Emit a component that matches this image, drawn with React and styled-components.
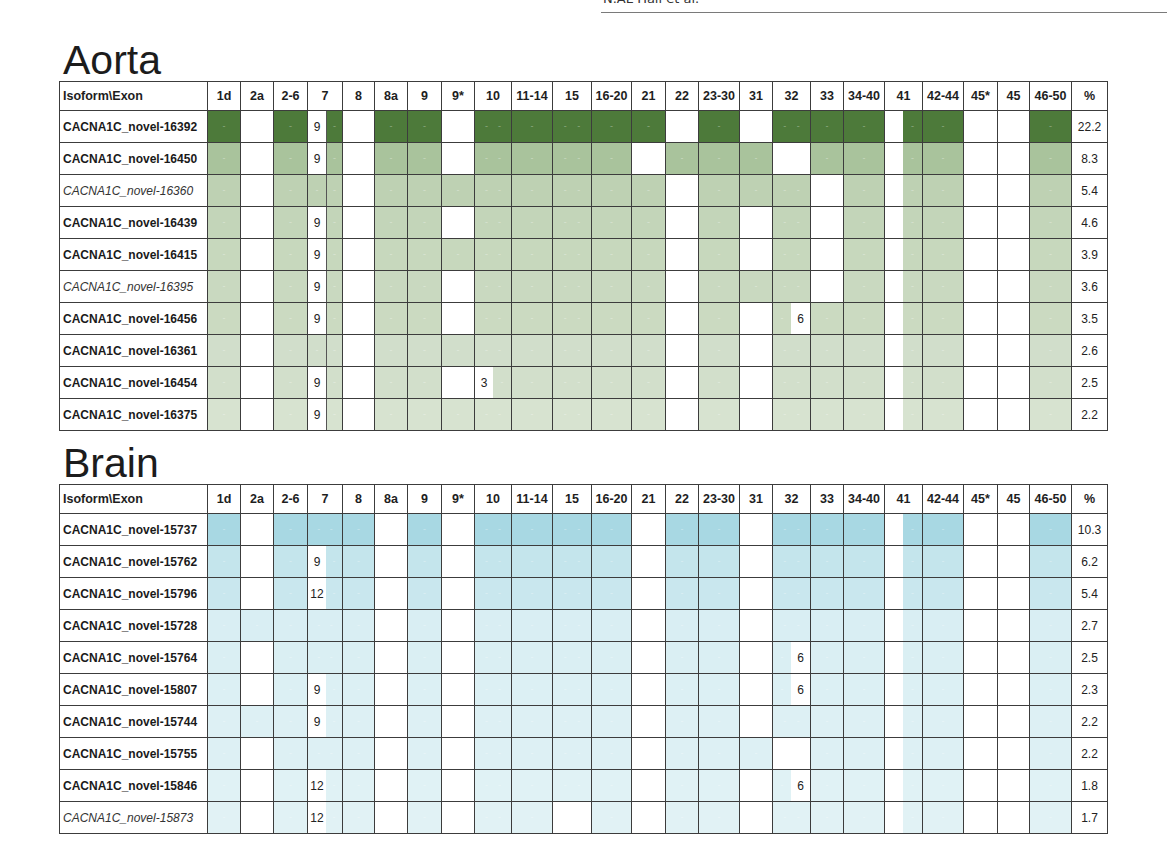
import React from 'react'
import styled, { createGlobalStyle } from 'styled-components'

const GlobalStyle = createGlobalStyle`
  html, body {
    margin: 0;
    padding: 0;
    background: #fff;
  }
  body {
    font-family: 'Liberation Sans', Arial, sans-serif;
    color: #222;
  }
`

// column pitch in px (cell + 1px rule), label column first, % last
const WIDTHS = [148, 33, 33, 34, 35, 32, 33, 34, 33, 37, 41, 39, 40, 34, 33, 41, 33, 38, 33, 41, 38, 41, 34, 32, 42, 36]
const EXONS = ['1d', '2a', '2-6', '7', '8', '8a', '9', '9*', '10', '11-14', '15', '16-20', '21', '22', '23-30', '31', '32', '33', '34-40', '41', '42-44', '45*', '45', '46-50']
const DOUBLE_DASH = ['10', '15', '32']

const AORTA = {
  title: 'Aorta',
  split7: true,
  colors: ['#4d7a3a', '#a9c39c', '#bed1b3', '#c3d5b9', '#c7d8bd', '#c9d9c0', '#cbdac1', '#d1decb', '#d2dfcb', '#d7e3d0'],
  rows: [
    ['CACNA1C_novel-16392', false, '22.2', 'x . x L9 . x x . x x x x x . x . x x x p x . . x'],
    ['CACNA1C_novel-16450', false, '8.3', 'x . x L9 . x x . x x x x . x x x . x x p x . . x'],
    ['CACNA1C_novel-16360', true, '5.4', 'x . x x . x x x x x x x x . x x x . x p x . . x'],
    ['CACNA1C_novel-16439', false, '4.6', 'x . x L9 . x x . x x x x x . x . x . x p x . . x'],
    ['CACNA1C_novel-16415', false, '3.9', 'x . x L9 . x x x x x x x x . x . x . x p x . . x'],
    ['CACNA1C_novel-16395', true, '3.6', 'x . x L9 . x x . x x x x x . x x x . x p x . . x'],
    ['CACNA1C_novel-16456', false, '3.5', 'x . x L9 . x x . x x x x x . x . R6 x x p x . . x'],
    ['CACNA1C_novel-16361', false, '2.6', 'x . x x . x x x x x x x x . x . x x x p x . . x'],
    ['CACNA1C_novel-16454', false, '2.5', 'x . x L9 . x x . L3 x x x x . x . x x x p x . . x'],
    ['CACNA1C_novel-16375', false, '2.2', 'x . x L9 . x x x x x x x x . x . x x x p x . . x'],
  ],
}

const BRAIN = {
  title: 'Brain',
  split7: false,
  colors: ['#a8d8e3', '#c4e5ec', '#c9e7ee', '#d9eef3', '#daeff3', '#dcf0f4', '#ddf0f4', '#ddf0f4', '#e0f2f5', '#e1f2f5'],
  rows: [
    ['CACNA1C_novel-15737', false, '10.3', 'x . x x x . x . x x x x . x x . x x x p x . . x'],
    ['CACNA1C_novel-15762', false, '6.2', 'x . x L9 x . x . x x x x . x x . x x x p x . . x'],
    ['CACNA1C_novel-15796', false, '5.4', 'x . x L12 x . x . x x x x . x x . x x x p x . . x'],
    ['CACNA1C_novel-15728', false, '2.7', 'x x x x x . x . x x x x . x x . x x x p x . . x'],
    ['CACNA1C_novel-15764', false, '2.5', 'x . x x x . x . x x x x . x x . R6 x x p x . . x'],
    ['CACNA1C_novel-15807', false, '2.3', 'x . x L9 x . x . x x x x . x x . R6 x x p x . . x'],
    ['CACNA1C_novel-15744', false, '2.2', 'x x x L9 x . x . x x x x . x x . x x x p x . . x'],
    ['CACNA1C_novel-15755', false, '2.2', 'x . x x x . x . x x x x . x x x . x x p x . . x'],
    ['CACNA1C_novel-15846', false, '1.8', 'x . x L12 x . x . x x x x . x x . R6 x x p x . . x'],
    ['CACNA1C_novel-15873', true, '1.7', 'x . x L12 x . x . x x . x . x x . x x x p x . . x'],
  ],
}

const Page = styled.div`
  width: 1167px;
  height: 844px;
  overflow: hidden;
  background: #fff;
`

const RunningHead = styled.div`
  display: flow-root;
  margin-left: 601px;
  height: 12px;
  border-bottom: 1px solid #7a7a7a;
  padding-left: 2px;
  font-family: 'DejaVu Sans', sans-serif;
  font-size: 13px;
  color: #333;
`

const HeadText = styled.span`
  display: block;
  margin-top: -8px;
  line-height: 14px;
`

const Figure = styled.div`
  padding: 27px 0 0 59px;
`

const Section = styled.section`
  & + & {
    margin-top: 12px;
  }
`

const Title = styled.h2`
  margin: 0;
  padding-left: 4px;
  font-family: 'Liberation Sans', Arial, sans-serif;
  font-weight: normal;
  font-size: 41px;
  line-height: 41px;
  color: #1c1c1c;
`

const Grid = styled.div`
  display: grid;
  grid-template-columns: ${WIDTHS.map(w => `${w - 1}px`).join(' ')};
  grid-template-rows: 28px;
  grid-auto-rows: 31px;
  gap: 1px;
  padding: 1px;
  width: max-content;
  background: #3c3c3c;
`

const HeadCell = styled.div`
  display: flex;
  align-items: center;
  justify-content: ${({ $left }) => ($left ? 'flex-start' : 'center')};
  padding-left: ${({ $left }) => ($left ? '3px' : '0')};
  background: #fff;
  font-size: 12.5px;
  font-weight: bold;
  color: #1e1e1e;
  white-space: nowrap;
`

const LabelCell = styled.div`
  display: flex;
  align-items: center;
  padding-left: 3px;
  background: #fff;
  font-size: 12px;
  font-weight: ${({ $italic }) => ($italic ? 'normal' : 'bold')};
  font-style: ${({ $italic }) => ($italic ? 'italic' : 'normal')};
  color: ${({ $italic }) => ($italic ? '#333' : '#1a1a1a')};
  white-space: nowrap;
`

const PercentCell = styled.div`
  display: flex;
  align-items: center;
  justify-content: center;
  background: #fff;
  font-size: 12px;
  color: #222;
`

const ExonCell = styled.div`
  display: flex;
  background: #fff;
`

const Segment = styled.div`
  display: flex;
  align-items: center;
  justify-content: space-evenly;
  flex: ${({ $w }) => ($w ? `0 0 ${$w}px` : '1 1 0')};
  background: ${({ $bg }) => $bg || '#fff'};
  border-left: ${({ $divider }) => ($divider ? '1px solid #555' : 'none')};
  font-size: 12px;
  color: #222;
`

const Dash = styled.span`
  font-size: 9px;
  line-height: 1;
  color: rgba(255, 255, 255, 0.38);
`

const dashes = n => Array.from({ length: n }, (_, i) => <Dash key={i}>-</Dash>)

function Exon({ token, exon, color, split7 }) {
  const is7 = exon === '7'
  const divide = is7 && split7

  if (token === '.') return <ExonCell />

  if (token === 'x') {
    if (divide) {
      return (
        <ExonCell>
          <Segment $w={18} $bg={color}>{dashes(1)}</Segment>
          <Segment $bg={color} $divider>{dashes(1)}</Segment>
        </ExonCell>
      )
    }
    const n = is7 || DOUBLE_DASH.includes(exon) ? 2 : 1
    return (
      <ExonCell>
        <Segment $bg={color}>{dashes(n)}</Segment>
      </ExonCell>
    )
  }

  if (token === 'p') {
    return (
      <ExonCell>
        <Segment $w={18} />
        <Segment $bg={color}>{dashes(1)}</Segment>
      </ExonCell>
    )
  }

  const text = token.slice(1)
  if (token[0] === 'L') {
    return (
      <ExonCell>
        <Segment $w={18}>{text}</Segment>
        <Segment $bg={color} $divider={divide}>{dashes(1)}</Segment>
      </ExonCell>
    )
  }

  return (
    <ExonCell>
      <Segment $bg={color}>{dashes(1)}</Segment>
      <Segment $w={19}>{text}</Segment>
    </ExonCell>
  )
}

function IsoformTable({ data }) {
  return (
    <Section>
      <Title>{data.title}</Title>
      <Grid>
        <HeadCell $left>Isoform\Exon</HeadCell>
        {EXONS.map(e => (
          <HeadCell key={e}>{e}</HeadCell>
        ))}
        <HeadCell>%</HeadCell>
        {data.rows.map(([name, italic, pct, cells], r) => (
          <React.Fragment key={name}>
            <LabelCell $italic={italic}>{name}</LabelCell>
            {cells.split(' ').map((t, i) => (
              <Exon key={i} token={t} exon={EXONS[i]} color={data.colors[r]} split7={data.split7} />
            ))}
            <PercentCell>{pct}</PercentCell>
          </React.Fragment>
        ))}
      </Grid>
    </Section>
  )
}

export default function App() {
  return (
    <Page>
      <GlobalStyle />
      <RunningHead>
        <HeadText>N.AL Hall et al.</HeadText>
      </RunningHead>
      <Figure>
        <IsoformTable data={AORTA} />
        <IsoformTable data={BRAIN} />
      </Figure>
    </Page>
  )
}
